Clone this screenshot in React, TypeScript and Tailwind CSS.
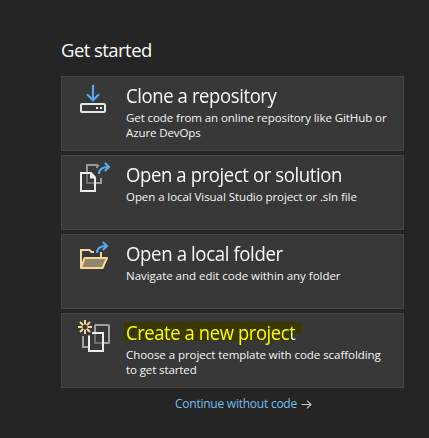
import type { ReactNode } from "react";

const arrowBlue = "#58a9f5";
const sand = "#f7d795";

function Icon({ top, children }: { top: number; children: ReactNode }) {
  return (
    <svg className="h-10 w-10 shrink-0" viewBox={`76 ${top} 40 40`} fill="none">
      {children}
    </svg>
  );
}

const CloneIcon = () => (
  <Icon top={80}>
    <path d="M93 85V100M87 94.2L93 100.2L99 94.2" stroke={arrowBlue} strokeWidth="2.1" />
    <rect x="81" y="104" width="24" height="8" rx="1" stroke="#e6e6e6" strokeWidth="2" />
    <path d="M96 107h2v2h-2zM100 107h2v2h-2z" fill="#eeeeee" />
  </Icon>
);

const SolutionIcon = () => (
  <Icon top={159}>
    <path d="M87 172V165H96.5L98 165.5L96.5 168M101 178V183H96" stroke="#999999" strokeWidth="2" />
    <path d="M87 173V183H95" stroke="#707070" strokeWidth="2" />
    <path d="M81 173H91L95 177.5V191H81Z" stroke="#eeeeee" strokeWidth="2" />
    <path d="M90 173L95 178.5H90Z" fill="#eeeeee" />
    <path d="M99 174C99 169.2 102 167 108.5 167M104.8 163L109 167L104.8 171" stroke={arrowBlue} strokeWidth="2.1" />
  </Icon>
);

const FolderIcon = () => (
  <Icon top={238}>
    <path d="M81 268V250H89.5L91.5 252H94M101 252V258" stroke={sand} strokeWidth="2" />
    <path d="M84.5 258H107L102.5 268H81Z" fill="#92866b" stroke={sand} strokeWidth="2" strokeLinejoin="round" />
    <path d="M97 253C97 248.2 100 246 106.5 246M102.8 242L107 246L102.8 250" stroke={arrowBlue} strokeWidth="2.1" />
  </Icon>
);

const CreateIcon = () => (
  <Icon top={317}>
    <rect x="95" y="325" width="14" height="18" rx="0.5" stroke="#a0a0a0" strokeWidth="2" />
    <path d="M83 336V347H88" stroke="#a0a0a0" strokeWidth="2" />
    <path d="M95 334V343H102" stroke="#707070" strokeWidth="2" />
    <path d="M89 335.5V351H103V333H92" stroke="#eeeeee" strokeWidth="2" />
    <path
      d="M85 320V324.5M85 329.5V334M78 327H82.5M87.5 327H92M80 322L83.2 325.2M86.8 328.8L90 332M80 332L83.2 328.8M86.8 325.2L90 322"
      stroke={sand}
      strokeWidth="2"
    />
  </Icon>
);

type Option = {
  icon: ReactNode;
  title: string;
  titleFit: string;
  lines: { text: string; tracking: string }[];
  marked?: boolean;
};

const options: Option[] = [
  {
    icon: <CloneIcon />,
    title: "Clone a repository",
    titleFit: "scale-x-[0.947]",
    lines: [
      { text: "Get code from an online repository like GitHub or", tracking: "tracking-[-0.08px]" },
      { text: "Azure DevOps", tracking: "tracking-[-0.1px]" },
    ],
  },
  {
    icon: <SolutionIcon />,
    title: "Open a project or solution",
    titleFit: "scale-x-[0.949]",
    lines: [{ text: "Open a local Visual Studio project or .sln file", tracking: "tracking-[-0.07px]" }],
  },
  {
    icon: <FolderIcon />,
    title: "Open a local folder",
    titleFit: "scale-x-[0.954]",
    lines: [{ text: "Navigate and edit code within any folder", tracking: "tracking-[-0.03px]" }],
  },
  {
    icon: <CreateIcon />,
    title: "Create a new project",
    titleFit: "scale-x-[0.942]",
    lines: [
      { text: "Choose a project template with code scaffolding", tracking: "tracking-[-0.05px]" },
      { text: "to get started", tracking: "tracking-[-0.1px]" },
    ],
    marked: true,
  },
];

function OptionCard({ icon, title, titleFit, lines, marked }: Option) {
  return (
    <button className="flex h-[75px] w-full items-start border border-[#464646] bg-[#383838] pt-[3px] pl-[14px] text-left">
      {icon}
      <span className="relative ml-[10px] flex flex-col whitespace-nowrap pt-[2px]">
        {marked && (
          <svg className="absolute top-[4px] -left-[2px] h-5 w-[178px]" viewBox="0 0 178 20">
            <path d="M0 1H178L177 13H170V20H0Z" fill="#383800" />
          </svg>
        )}
        <span
          className={`relative origin-left self-start text-[19.5px] leading-[28px] tracking-[-0.4px] ${titleFit} ${marked ? "text-[#ffff00]" : "text-[#fafafa]"}`}
        >
          {marked ? (
            <>
              {title.slice(0, -1)}
              <span className="bg-linear-to-b from-[#ffff00] from-50% to-[#fafafa] to-60% bg-clip-text text-transparent">
                {title.slice(-1)}
              </span>
            </>
          ) : (
            title
          )}
        </span>
        {lines.map((line) => (
          <span key={line.text} className={`text-[11.5px] leading-[15px] text-[#f5f5f5] ${line.tracking}`}>
            {line.text}
          </span>
        ))}
      </span>
    </button>
  );
}

export default function App() {
  return (
    <main className="flex h-[438px] w-[429px] flex-col border-b border-[#2b2026] bg-[#252525] pl-[61px] font-['Open_Sans','Noto_Sans',sans-serif]">
      <h1 className="mt-[36px] h-10 text-[18.5px] leading-[28px] tracking-[-0.55px] text-[#fafafa]">Get started</h1>
      <div className="flex w-[343px] flex-col gap-1">
        {options.map((option) => (
          <OptionCard key={option.title} {...option} />
        ))}
      </div>
      <a className="mt-2 ml-[114px] flex items-center text-[12px] leading-4 tracking-[-0.24px] whitespace-nowrap text-[#74bdf0]">
        <span>Continue without code</span>
        <svg className="ml-1 h-[9px] w-[11px]" viewBox="0 0 11 9" fill="none">
          <path d="M0.5 4.5H10M6 0.7L10 4.5L6 8.3" stroke="#c8c8c8" strokeWidth="1.1" />
        </svg>
      </a>
    </main>
  );
}
